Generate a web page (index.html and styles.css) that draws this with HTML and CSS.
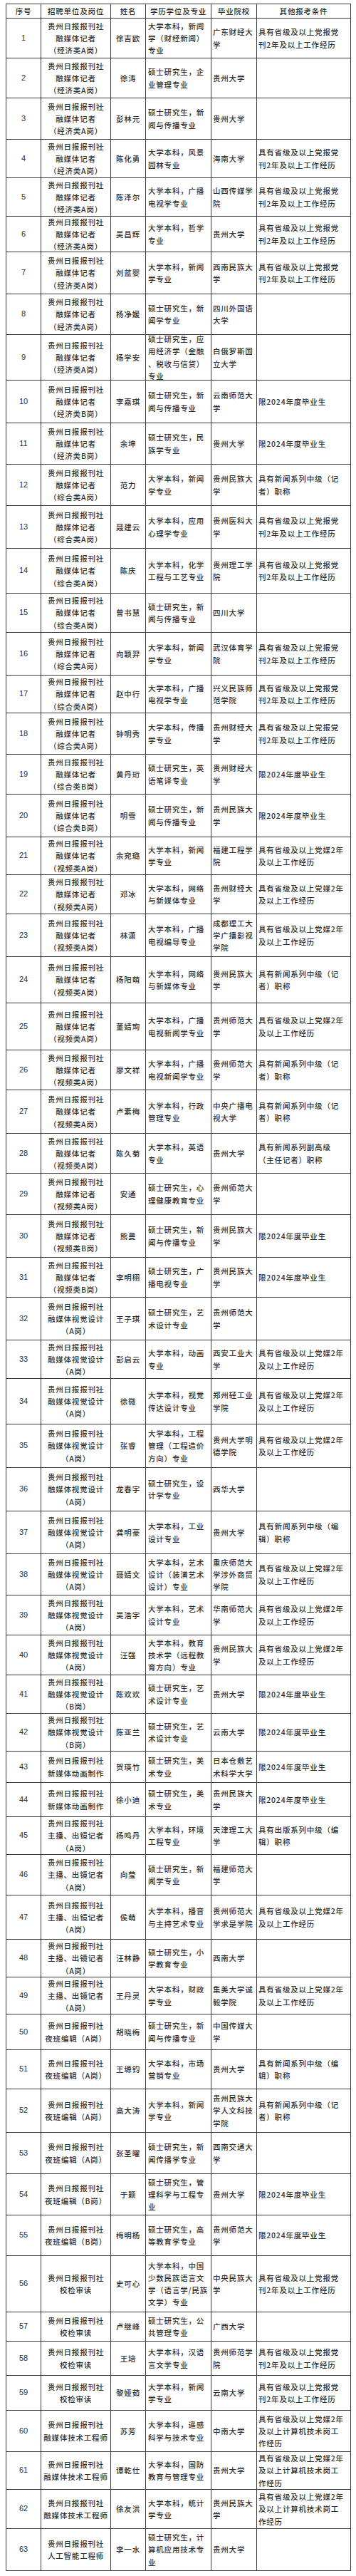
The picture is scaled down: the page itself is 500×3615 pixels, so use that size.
FILE: index.html
```html
<!DOCTYPE html>
<html lang="zh-CN">
<head>
<meta charset="utf-8">
<title>贵州日报报刊社招聘名单</title>
<link rel="stylesheet" href="styles.css">
</head>
<body>
<div class="sheet">
<div class="c h">序号</div><div class="c h">招聘单位及岗位</div><div class="c h">姓名</div><div class="c h">学历学位及专业</div><div class="c h">毕业院校</div><div class="c h">其他报考条件</div>

<div class="c n">1</div><div class="c">贵州日报报刊社<br>融媒体记者<br>（经济类A岗）</div><div class="c">徐吉欧</div><div class="c e">大学本科，新闻<br>学（财经新闻）<br>专业</div><div class="c s">广东财经大<br>学</div><div class="c s">具有省级及以上党报党<br>刊2年及以上工作经历</div>
<div class="c n">2</div><div class="c">贵州日报报刊社<br>融媒体记者<br>（经济类A岗）</div><div class="c">徐涛</div><div class="c e">硕士研究生，企<br>业管理专业</div><div class="c s">贵州大学</div><div class="c s"></div>
<div class="c n">3</div><div class="c">贵州日报报刊社<br>融媒体记者<br>（经济类A岗）</div><div class="c">彭林元</div><div class="c e">硕士研究生，新<br>闻与传播专业</div><div class="c s">贵州大学</div><div class="c s"></div>
<div class="c n">4</div><div class="c">贵州日报报刊社<br>融媒体记者<br>（经济类A岗）</div><div class="c">陈化勇</div><div class="c e">大学本科，风景<br>园林专业</div><div class="c s">海南大学</div><div class="c s">具有省级及以上党报党<br>刊2年及以上工作经历</div>
<div class="c n">5</div><div class="c">贵州日报报刊社<br>融媒体记者<br>（经济类A岗）</div><div class="c">陈泽尔</div><div class="c e">大学本科，广播<br>电视学专业</div><div class="c s">山西传媒学<br>院</div><div class="c s">具有省级及以上党报党<br>刊2年及以上工作经历</div>
<div class="c n">6</div><div class="c">贵州日报报刊社<br>融媒体记者<br>（经济类A岗）</div><div class="c">吴昌辉</div><div class="c e">大学本科，哲学<br>专业</div><div class="c s">贵州大学</div><div class="c s">具有省级及以上党报党<br>刊2年及以上工作经历</div>
<div class="c n">7</div><div class="c">贵州日报报刊社<br>融媒体记者<br>（经济类A岗）</div><div class="c">刘蓝婴</div><div class="c e">大学本科，新闻<br>学专业</div><div class="c s">西南民族大<br>学</div><div class="c s">具有省级及以上党报党<br>刊2年及以上工作经历</div>
<div class="c n">8</div><div class="c">贵州日报报刊社<br>融媒体记者<br>（经济类A岗）</div><div class="c">杨净媛</div><div class="c e">硕士研究生，新<br>闻学专业</div><div class="c s">四川外国语<br>大学</div><div class="c s"></div>
<div class="c n">9</div><div class="c">贵州日报报刊社<br>融媒体记者<br>（经济类A岗）</div><div class="c">杨学安</div><div class="c e">硕士研究生，应<br>用经济学（金融<br>、税收与信贷）<br>专业</div><div class="c s">白俄罗斯国<br>立大学</div><div class="c s"></div>
<div class="c n">10</div><div class="c">贵州日报报刊社<br>融媒体记者<br>（经济类B岗）</div><div class="c">李嘉琪</div><div class="c e">硕士研究生，新<br>闻与传播专业</div><div class="c s">云南师范大<br>学</div><div class="c s">限2024年度毕业生</div>
<div class="c n">11</div><div class="c">贵州日报报刊社<br>融媒体记者<br>（经济类B岗）</div><div class="c">余坤</div><div class="c e">硕士研究生，民<br>族学专业</div><div class="c s">贵州大学</div><div class="c s">限2024年度毕业生</div>
<div class="c n">12</div><div class="c">贵州日报报刊社<br>融媒体记者<br>（综合类A岗）</div><div class="c">范力</div><div class="c e">大学本科，新闻<br>学专业</div><div class="c s">贵州民族大<br>学</div><div class="c s">具有新闻系列中级（记<br>者）职称</div>
<div class="c n">13</div><div class="c">贵州日报报刊社<br>融媒体记者<br>（综合类A岗）</div><div class="c">聂建云</div><div class="c e">大学本科，应用<br>心理学专业</div><div class="c s">贵州医科大<br>学</div><div class="c s">具有省级及以上党报党<br>刊2年及以上工作经历</div>
<div class="c n">14</div><div class="c">贵州日报报刊社<br>融媒体记者<br>（综合类A岗）</div><div class="c">陈庆</div><div class="c e">大学本科，化学<br>工程与工艺专业</div><div class="c s">贵州理工学<br>院</div><div class="c s">具有省级及以上党报党<br>刊2年及以上工作经历</div>
<div class="c n">15</div><div class="c">贵州日报报刊社<br>融媒体记者<br>（综合类A岗）</div><div class="c">曾书慧</div><div class="c e">硕士研究生，新<br>闻与传播专业</div><div class="c s">四川大学</div><div class="c s"></div>
<div class="c n">16</div><div class="c">贵州日报报刊社<br>融媒体记者<br>（综合类A岗）</div><div class="c">向颖羿</div><div class="c e">大学本科，新闻<br>学专业</div><div class="c s">武汉体育学<br>院</div><div class="c s">具有省级及以上党报党<br>刊2年及以上工作经历</div>
<div class="c n">17</div><div class="c">贵州日报报刊社<br>融媒体记者<br>（综合类A岗）</div><div class="c">赵中行</div><div class="c e">大学本科，广播<br>电视学专业</div><div class="c s">兴义民族师<br>范学院</div><div class="c s">具有省级及以上党报党<br>刊2年及以上工作经历</div>
<div class="c n">18</div><div class="c">贵州日报报刊社<br>融媒体记者<br>（综合类A岗）</div><div class="c">钟明秀</div><div class="c e">大学本科，传播<br>学专业</div><div class="c s">贵州财经大<br>学</div><div class="c s">具有省级及以上党报党<br>刊2年及以上工作经历</div>
<div class="c n">19</div><div class="c">贵州日报报刊社<br>融媒体记者<br>（综合类B岗）</div><div class="c">黄丹珩</div><div class="c e">硕士研究生，英<br>语笔译专业</div><div class="c s">贵州财经大<br>学</div><div class="c s">限2024年度毕业生</div>
<div class="c n">20</div><div class="c">贵州日报报刊社<br>融媒体记者<br>（综合类B岗）</div><div class="c">明雪</div><div class="c e">硕士研究生，新<br>闻与传播专业</div><div class="c s">贵州民族大<br>学</div><div class="c s">限2024年度毕业生</div>
<div class="c n">21</div><div class="c">贵州日报报刊社<br>融媒体记者<br>（视频类A岗）</div><div class="c">余宛璐</div><div class="c e">大学本科，新闻<br>学专业</div><div class="c s">福建工程学<br>院</div><div class="c s">具有省级及以上党媒2年<br>及以上工作经历</div>
<div class="c n">22</div><div class="c">贵州日报报刊社<br>融媒体记者<br>（视频类A岗）</div><div class="c">邓冰</div><div class="c e">大学本科，网络<br>与新媒体专业</div><div class="c s">贵州财经大<br>学</div><div class="c s">具有省级及以上党媒2年<br>及以上工作经历</div>
<div class="c n">23</div><div class="c">贵州日报报刊社<br>融媒体记者<br>（视频类A岗）</div><div class="c">林潇</div><div class="c e">大学本科，广播<br>电视编导专业</div><div class="c s">成都理工大<br>学广播影视<br>学院</div><div class="c s">具有省级及以上党媒2年<br>及以上工作经历</div>
<div class="c n">24</div><div class="c">贵州日报报刊社<br>融媒体记者<br>（视频类A岗）</div><div class="c">杨阳萌</div><div class="c e">大学本科，网络<br>与新媒体专业</div><div class="c s">贵州民族大<br>学</div><div class="c s">具有新闻系列中级（记<br>者）职称</div>
<div class="c n">25</div><div class="c">贵州日报报刊社<br>融媒体记者<br>（视频类A岗）</div><div class="c">董婧珣</div><div class="c e">大学本科，广播<br>电视新闻学专业</div><div class="c s">贵州师范大<br>学</div><div class="c s">具有省级及以上党媒2年<br>及以上工作经历</div>
<div class="c n">26</div><div class="c">贵州日报报刊社<br>融媒体记者<br>（视频类A岗）</div><div class="c">廖文祥</div><div class="c e">大学本科，广播<br>电视新闻学专业</div><div class="c s">贵州师范大<br>学</div><div class="c s">具有新闻系列中级（记<br>者）职称</div>
<div class="c n">27</div><div class="c">贵州日报报刊社<br>融媒体记者<br>（视频类A岗）</div><div class="c">卢素梅</div><div class="c e">大学本科，行政<br>管理专业</div><div class="c s">中央广播电<br>视大学</div><div class="c s">具有新闻系列中级（记<br>者）职称</div>
<div class="c n">28</div><div class="c">贵州日报报刊社<br>融媒体记者<br>（视频类A岗）</div><div class="c">陈久菊</div><div class="c e">大学本科，英语<br>专业</div><div class="c s">贵州大学</div><div class="c s">具有新闻系列副高级<br>（主任记者）职称</div>
<div class="c n">29</div><div class="c">贵州日报报刊社<br>融媒体记者<br>（视频类A岗）</div><div class="c">安通</div><div class="c e">硕士研究生，心<br>理健康教育专业</div><div class="c s">贵州师范大<br>学</div><div class="c s"></div>
<div class="c n">30</div><div class="c">贵州日报报刊社<br>融媒体记者<br>（视频类B岗）</div><div class="c">熊曼</div><div class="c e">硕士研究生，新<br>闻与传播专业</div><div class="c s">贵州民族大<br>学</div><div class="c s">限2024年度毕业生</div>
<div class="c n">31</div><div class="c">贵州日报报刊社<br>融媒体记者<br>（视频类B岗）</div><div class="c">李明栩</div><div class="c e">硕士研究生，广<br>播电视专业</div><div class="c s">贵州民族大<br>学</div><div class="c s">限2024年度毕业生</div>
<div class="c n">32</div><div class="c">贵州日报报刊社<br>融媒体视觉设计<br>（A岗）</div><div class="c">王子琪</div><div class="c e">硕士研究生，艺<br>术设计专业</div><div class="c s">贵州师范大<br>学</div><div class="c s"></div>
<div class="c n">33</div><div class="c">贵州日报报刊社<br>融媒体视觉设计<br>（A岗）</div><div class="c">彭启云</div><div class="c e">大学本科，动画<br>专业</div><div class="c s">西安工业大<br>学</div><div class="c s">具有省级及以上党媒2年<br>及以上工作经历</div>
<div class="c n">34</div><div class="c">贵州日报报刊社<br>融媒体视觉设计<br>（A岗）</div><div class="c">徐微</div><div class="c e">大学本科，视觉<br>传达设计专业</div><div class="c s">郑州轻工业<br>学院</div><div class="c s">具有省级及以上党媒2年<br>及以上工作经历</div>
<div class="c n">35</div><div class="c">贵州日报报刊社<br>融媒体视觉设计<br>（A岗）</div><div class="c">张睿</div><div class="c e">大学本科，工程<br>管理（工程造价<br>方向）专业</div><div class="c s">贵州大学明<br>德学院</div><div class="c s">具有省级及以上党媒2年<br>及以上工作经历</div>
<div class="c n">36</div><div class="c">贵州日报报刊社<br>融媒体视觉设计<br>（A岗）</div><div class="c">龙春宇</div><div class="c e">硕士研究生，设<br>计学专业</div><div class="c s">西华大学</div><div class="c s"></div>
<div class="c n">37</div><div class="c">贵州日报报刊社<br>融媒体视觉设计<br>（A岗）</div><div class="c">龚明豪</div><div class="c e">大学本科，工业<br>设计专业</div><div class="c s">贵州大学</div><div class="c s">具有新闻系列中级（编<br>辑）职称</div>
<div class="c n">38</div><div class="c">贵州日报报刊社<br>融媒体视觉设计<br>（A岗）</div><div class="c">聂婧文</div><div class="c e">大学本科，艺术<br>设计（装潢艺术<br>设计）专业</div><div class="c s">重庆师范大<br>学涉外商贸<br>学院</div><div class="c s">具有省级及以上党媒2年<br>及以上工作经历</div>
<div class="c n">39</div><div class="c">贵州日报报刊社<br>融媒体视觉设计<br>（A岗）</div><div class="c">吴浩宇</div><div class="c e">大学本科，艺术<br>设计专业</div><div class="c s">华南师范大<br>学</div><div class="c s">具有省级及以上党媒2年<br>及以上工作经历</div>
<div class="c n">40</div><div class="c">贵州日报报刊社<br>融媒体视觉设计<br>（A岗）</div><div class="c">汪强</div><div class="c e">大学本科，教育<br>技术学（远程教<br>育方向）专业</div><div class="c s">贵州民族大<br>学</div><div class="c s">具有省级及以上党媒2年<br>及以上工作经历</div>
<div class="c n">41</div><div class="c">贵州日报报刊社<br>融媒体视觉设计<br>（B岗）</div><div class="c">陈欢欢</div><div class="c e">硕士研究生，艺<br>术设计专业</div><div class="c s">贵州大学</div><div class="c s">限2024年度毕业生</div>
<div class="c n">42</div><div class="c">贵州日报报刊社<br>融媒体视觉设计<br>（B岗）</div><div class="c">陈亚兰</div><div class="c e">硕士研究生，艺<br>术设计专业</div><div class="c s">云南大学</div><div class="c s">限2024年度毕业生</div>
<div class="c n">43</div><div class="c">贵州日报报刊社<br>新媒体动画制作</div><div class="c">贺瑛竹</div><div class="c e">硕士研究生，美<br>术专业</div><div class="c s">日本仓敷艺<br>术科学大学</div><div class="c s">限2024年度毕业生</div>
<div class="c n">44</div><div class="c">贵州日报报刊社<br>新媒体动画制作</div><div class="c">徐小迪</div><div class="c e">硕士研究生，美<br>术专业</div><div class="c s">贵州民族大<br>学</div><div class="c s">限2024年度毕业生</div>
<div class="c n">45</div><div class="c">贵州日报报刊社<br>主播、出镜记者<br>（A岗）</div><div class="c">杨鸣丹</div><div class="c e">大学本科，环境<br>工程专业</div><div class="c s">天津理工大<br>学</div><div class="c s">具有出版系列中级（编<br>辑）职称</div>
<div class="c n">46</div><div class="c">贵州日报报刊社<br>主播、出镜记者<br>（A岗）</div><div class="c">向莹</div><div class="c e">硕士研究生，新<br>闻学专业</div><div class="c s">福建师范大<br>学</div><div class="c s"></div>
<div class="c n">47</div><div class="c">贵州日报报刊社<br>主播、出镜记者<br>（A岗）</div><div class="c">侯萌</div><div class="c e">大学本科，播音<br>与主持艺术专业</div><div class="c s">贵州师范大<br>学求是学院</div><div class="c s">具有省级及以上党媒2年<br>及以上工作经历</div>
<div class="c n">48</div><div class="c">贵州日报报刊社<br>主播、出镜记者<br>（A岗）</div><div class="c">汪林静</div><div class="c e">硕士研究生，小<br>学教育专业</div><div class="c s">西南大学</div><div class="c s"></div>
<div class="c n">49</div><div class="c">贵州日报报刊社<br>主播、出镜记者<br>（A岗）</div><div class="c">王丹灵</div><div class="c e">大学本科，财政<br>学专业</div><div class="c s">集美大学诚<br>毅学院</div><div class="c s">具有省级及以上党媒2年<br>及以上工作经历</div>
<div class="c n">50</div><div class="c">贵州日报报刊社<br>夜班编辑（A岗）</div><div class="c">胡晓梅</div><div class="c e">硕士研究生，新<br>闻与传播专业</div><div class="c s">中国传媒大<br>学</div><div class="c s"></div>
<div class="c n">51</div><div class="c">贵州日报报刊社<br>夜班编辑（A岗）</div><div class="c">王塬钧</div><div class="c e">大学本科，市场<br>营销专业</div><div class="c s">贵州大学</div><div class="c s">具有新闻系列中级（编<br>辑）职称</div>
<div class="c n">52</div><div class="c">贵州日报报刊社<br>夜班编辑（A岗）</div><div class="c">高大涛</div><div class="c e">大学本科，新闻<br>学专业</div><div class="c s">贵州民族大<br>学人文科技<br>学院</div><div class="c s">具有新闻系列中级（记<br>者）职称</div>
<div class="c n">53</div><div class="c">贵州日报报刊社<br>夜班编辑（A岗）</div><div class="c">张圣曜</div><div class="c e">硕士研究生，新<br>闻传播学专业</div><div class="c s">西南交通大<br>学</div><div class="c s"></div>
<div class="c n">54</div><div class="c">贵州日报报刊社<br>夜班编辑（B岗）</div><div class="c">于颖</div><div class="c e">硕士研究生，管<br>理科学与工程专<br>业</div><div class="c s">贵州大学</div><div class="c s">限2024年度毕业生</div>
<div class="c n">55</div><div class="c">贵州日报报刊社<br>夜班编辑（B岗）</div><div class="c">梅明杨</div><div class="c e">硕士研究生，高<br>等教育学专业</div><div class="c s">贵州师范大<br>学</div><div class="c s">限2024年度毕业生</div>
<div class="c n">56</div><div class="c">贵州日报报刊社<br>校检审读</div><div class="c">史可心</div><div class="c e">大学本科，中国<br>少数民族语言文<br>学（语言学/民族<br>文学）专业</div><div class="c s">中央民族大<br>学</div><div class="c s">具有省级及以上党报党<br>刊2年及以上工作经历</div>
<div class="c n">57</div><div class="c">贵州日报报刊社<br>校检审读</div><div class="c">卢继峰</div><div class="c e">硕士研究生，公<br>共管理专业</div><div class="c s">广西大学</div><div class="c s"></div>
<div class="c n">58</div><div class="c">贵州日报报刊社<br>校检审读</div><div class="c">王培</div><div class="c e">大学本科，汉语<br>言文学专业</div><div class="c s">贵州师范学<br>院</div><div class="c s">具有省级及以上党报党<br>刊2年及以上工作经历</div>
<div class="c n">59</div><div class="c">贵州日报报刊社<br>校检审读</div><div class="c">黎娅茹</div><div class="c e">大学本科，新闻<br>学专业</div><div class="c s">云南大学</div><div class="c s">具有省级及以上党报党<br>刊2年及以上工作经历</div>
<div class="c n">60</div><div class="c">贵州日报报刊社<br>融媒体技术工程师</div><div class="c">苏芳</div><div class="c e">大学本科，遥感<br>科学与技术专业</div><div class="c s">中南大学</div><div class="c s">具有省级及以上党媒2年<br>及以上计算机技术岗工<br>作经历</div>
<div class="c n">61</div><div class="c">贵州日报报刊社<br>融媒体技术工程师</div><div class="c">谭乾仕</div><div class="c e">大学本科，国防<br>教育与管理专业</div><div class="c s">贵州大学</div><div class="c s">具有省级及以上党媒2年<br>及以上计算机技术岗工<br>作经历</div>
<div class="c n">62</div><div class="c">贵州日报报刊社<br>融媒体技术工程师</div><div class="c">徐友洪</div><div class="c e">大学本科，统计<br>学专业</div><div class="c s">贵州民族大<br>学</div><div class="c s">具有省级及以上党媒2年<br>及以上计算机技术岗工<br>作经历</div>
<div class="c n">63</div><div class="c">贵州日报报刊社<br>人工智能工程师</div><div class="c">李一水</div><div class="c e">硕士研究生，计<br>算机应用技术专<br>业</div><div class="c s">贵州大学</div><div class="c s"></div>
</div>
</body>
</html>
```

FILE: styles.css
```css
html, body {
  margin: 0;
  background: #ffffff;
}

body {
  padding: 5px 8px 0;
  font-family: "Noto Sans CJK SC", "Noto Sans", sans-serif;
  color: #2e2e2e;
}

.sheet {
  display: grid;
  box-sizing: border-box;
  width: 485px;
  grid-template-columns: 49px 98px 49px 92px 64px 132px;
  grid-template-rows:
    20px 56px 56px 58px 54px 54px 50px 59px 57px 64px
    60px 58px 58px 60px 63px 55px 60px 53px 58px 56px
    60px 53px 55px 60px 65px 66px 56px 61px 56px 58px
    60px 56px 60px 54px 64px 61px 61px 60px 58px 56px
    56px 54px 53px 44px 48px 53px 57px 62px 53px 52px
    50px 55px 61px 58px 58px 57px 79px 41px 48px 49px
    58px 53px 55px 59px;
  border-left: 1px solid #3a3a3a;
  border-top: 1px solid #3a3a3a;
}

.c {
  box-sizing: border-box;
  min-width: 0;
  display: flex;
  align-items: center;
  justify-content: center;
  text-align: center;
  border-right: 1px solid #3a3a3a;
  border-bottom: 1px solid #3a3a3a;
  font-size: 10.5px;
  font-weight: 500;
  letter-spacing: 0.8px;
  line-height: 17.2px;
  white-space: nowrap;
}

.h {
  color: #2a2a2a;
}

.n {
  font-family: "Liberation Sans", "Noto Sans", sans-serif;
  font-size: 11px;
  font-weight: 400;
  letter-spacing: 0;
}

.e {
  justify-content: flex-start;
  text-align: left;
  padding-left: 3px;
}

.s {
  justify-content: flex-start;
  text-align: left;
  padding-left: 2px;
}
```
